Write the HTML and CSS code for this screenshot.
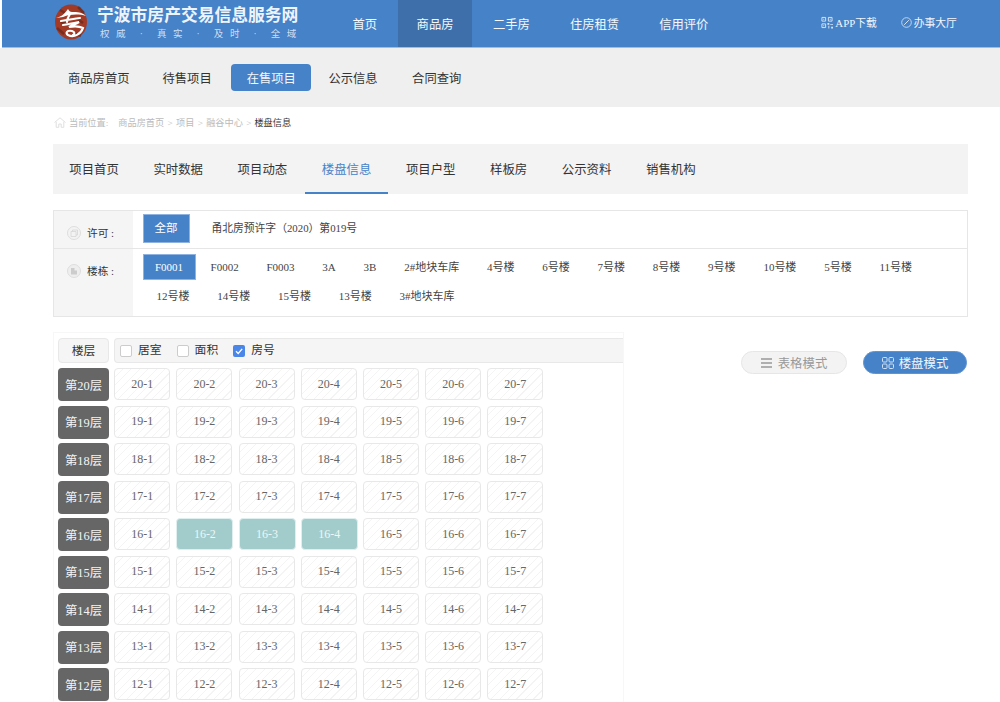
FILE: index.html
```html
<!DOCTYPE html>
<html lang="zh-CN">
<head>
<meta charset="utf-8">
<title>楼盘信息</title>
<link rel="stylesheet" href="styles.css">
</head>
<body>
<header class="topbar">
  <div class="brand">
    <svg class="logo" viewBox="0 0 34 36" width="34" height="36">
      <ellipse cx="17" cy="18" rx="16" ry="17.500" fill="#a23a26"/>
      <path d="M6 6 L13 10 M24 3 L30 9 M3 24 L10 30 M22 14 L29 19 M20 29 L27 32 M7 18 L12 20" stroke="#5e241a" stroke-width="2.500" opacity=".6" fill="none"/>
      <path d="M2 14 C6 13 10 11 14 5 C15 7 16 8 18 8 C23 8 28 8 32 12 C25 10 17 10 9 13" fill="#fff"/>
      <path d="M16 10 C14 13 13 15 13 18 M7 17 C13 16 19 15 26 14 M9 21 C15 20 20 19 25 18 C22 20 18 21 15 23 C20 22 25 22 29 24 C27 30 20 34 14 31 C11 29 13 26 18 27 C21 28 21 30 19 31" fill="none" stroke="#fff" stroke-width="2.200" stroke-linecap="round"/>
    </svg>
    <div class="brand-text">
      <div class="brand-title">宁波市房产交易信息服务网</div>
      <div class="brand-sub">权威 · 真实 · 及时 · 全域</div>
    </div>
  </div>
  <nav class="mainnav">
    <a class="mainnav-item">首页</a>
    <a class="mainnav-item is-active">商品房</a>
    <a class="mainnav-item">二手房</a>
    <a class="mainnav-item">住房租赁</a>
    <a class="mainnav-item">信用评价</a>
  </nav>
  <div class="toplinks">
    <a class="toplink toplink-app">
      <svg class="qr" viewBox="0 0 13 13" width="12" height="13">
        <path d="M1 1h4v4H1zM8 1h4v4H8zM1 8h4v4H1z" fill="none" stroke="#dbe7f5" stroke-width="1"/>
        <path d="M2.500 2.500h1v1h-1zM9.500 2.500h1v1h-1zM2.500 9.500h1v1h-1zM7 7h2v2H7zM10 8h3v1h-3zM8 10h1v3H8zM11 11h2v2h-2z" fill="#dbe7f5"/>
      </svg>APP下载
    </a>
    <a class="toplink">
      <svg class="hall" viewBox="0 0 11 11" width="11" height="11">
        <circle cx="5.500" cy="5.500" r="4.800" fill="none" stroke="#dbe7f5" stroke-width=".8"/>
        <path d="M3.200 7.800 L7.800 3.200" stroke="#dbe7f5" stroke-width="1" fill="none"/>
      </svg>办事大厅
    </a>
  </div>
</header>

<div class="subnav">
  <a class="subnav-item">商品房首页</a>
  <a class="subnav-item">待售项目</a>
  <a class="subnav-item is-active">在售项目</a>
  <a class="subnav-item">公示信息</a>
  <a class="subnav-item">合同查询</a>
</div>

<main class="content">
  <div class="crumbs">
    <svg class="crumb-home" viewBox="0 0 12 11" width="12" height="11">
      <path d="M.5 5.500 6 .8l5.500 4.700M2.200 4.800V10.300h2.600V7h2.400v3.300h2.600V4.800" fill="none" stroke="#ddd" stroke-width=".9"/>
    </svg>
    <span class="crumb-label">当前位置:</span>
    <span class="crumb-path">商品房首页 &gt; 项目 &gt; 融谷中心 &gt;</span>
    <span class="crumb-current">楼盘信息</span>
  </div>

  <div class="tabs">
    <a class="tab">项目首页</a>
    <a class="tab">实时数据</a>
    <a class="tab">项目动态</a>
    <a class="tab is-active">楼盘信息</a>
    <a class="tab">项目户型</a>
    <a class="tab">样板房</a>
    <a class="tab">公示资料</a>
    <a class="tab">销售机构</a>
  </div>

  <section class="filter">
    <div class="filter-row filter-row-permit">
      <div class="filter-label">
        <svg class="filter-icon" viewBox="0 0 14 14" width="14" height="14">
          <circle cx="7" cy="7" r="6.500" fill="#f3f3f3" stroke="#ddd"/>
          <path d="M4 5.500h5v5H4zM5.500 5.500V4h5v5H9" fill="none" stroke="#d5d5d5" stroke-width=".8"/>
        </svg>
        <span>许可 :</span>
      </div>
      <div class="filter-options">
        <a class="option option-all is-active">全部</a>
        <a class="option option-permit">甬北房预许字（2020）第019号</a>
      </div>
    </div>
    <div class="filter-row">
      <div class="filter-label">
        <svg class="filter-icon" viewBox="0 0 14 14" width="14" height="14">
          <circle cx="7" cy="7" r="6.500" fill="#eee" stroke="#ddd"/>
          <path d="M4 10.500V4h3.500v6.500zM7.500 6.500H10v4H7.500z" fill="#ccc"/>
        </svg>
        <span>楼栋 :</span>
      </div>
      <div class="filter-options filter-options-wrap">
        <a class="option is-active">F0001</a>
        <a class="option">F0002</a>
        <a class="option">F0003</a>
        <a class="option">3A</a>
        <a class="option">3B</a>
        <a class="option">2#地块车库</a>
        <a class="option">4号楼</a>
        <a class="option">6号楼</a>
        <a class="option">7号楼</a>
        <a class="option">8号楼</a>
        <a class="option">9号楼</a>
        <a class="option">10号楼</a>
        <a class="option">5号楼</a>
        <a class="option">11号楼</a>
        <a class="option">12号楼</a>
        <a class="option">14号楼</a>
        <a class="option">15号楼</a>
        <a class="option">13号楼</a>
        <a class="option">3#地块车库</a>
      </div>
    </div>
  </section>

  <section class="board">
    <div class="panel">
      <div class="panel-head">
        <div class="floor-title">楼层</div>
        <div class="checks">
          <label class="check"><span class="box"></span>居室</label>
          <label class="check"><span class="box"></span>面积</label>
          <label class="check"><span class="box is-checked"><svg viewBox="0 0 12 12" width="12" height="12"><path d="M3 6.200 5.200 8.500 9.200 3.800" fill="none" stroke="#fff" stroke-width="1.300"/></svg></span>房号</label>
        </div>
      </div>
      <div class="grid">
        <div class="floor">第20层</div><div class="cell">20-1</div><div class="cell">20-2</div><div class="cell">20-3</div><div class="cell">20-4</div><div class="cell">20-5</div><div class="cell">20-6</div><div class="cell">20-7</div>
        <div class="floor">第19层</div><div class="cell">19-1</div><div class="cell">19-2</div><div class="cell">19-3</div><div class="cell">19-4</div><div class="cell">19-5</div><div class="cell">19-6</div><div class="cell">19-7</div>
        <div class="floor">第18层</div><div class="cell">18-1</div><div class="cell">18-2</div><div class="cell">18-3</div><div class="cell">18-4</div><div class="cell">18-5</div><div class="cell">18-6</div><div class="cell">18-7</div>
        <div class="floor">第17层</div><div class="cell">17-1</div><div class="cell">17-2</div><div class="cell">17-3</div><div class="cell">17-4</div><div class="cell">17-5</div><div class="cell">17-6</div><div class="cell">17-7</div>
        <div class="floor">第16层</div><div class="cell">16-1</div><div class="cell is-sold">16-2</div><div class="cell is-sold">16-3</div><div class="cell is-sold">16-4</div><div class="cell">16-5</div><div class="cell">16-6</div><div class="cell">16-7</div>
        <div class="floor">第15层</div><div class="cell">15-1</div><div class="cell">15-2</div><div class="cell">15-3</div><div class="cell">15-4</div><div class="cell">15-5</div><div class="cell">15-6</div><div class="cell">15-7</div>
        <div class="floor">第14层</div><div class="cell">14-1</div><div class="cell">14-2</div><div class="cell">14-3</div><div class="cell">14-4</div><div class="cell">14-5</div><div class="cell">14-6</div><div class="cell">14-7</div>
        <div class="floor">第13层</div><div class="cell">13-1</div><div class="cell">13-2</div><div class="cell">13-3</div><div class="cell">13-4</div><div class="cell">13-5</div><div class="cell">13-6</div><div class="cell">13-7</div>
        <div class="floor">第12层</div><div class="cell">12-1</div><div class="cell">12-2</div><div class="cell">12-3</div><div class="cell">12-4</div><div class="cell">12-5</div><div class="cell">12-6</div><div class="cell">12-7</div>
      </div>
    </div>
    <div class="modes">
      <a class="mode">
        <svg viewBox="0 0 12 10" width="12" height="10"><path d="M0 1h11M0 5h11M0 9h11" stroke="#999" stroke-width="1.300" fill="none"/></svg>表格模式
      </a>
      <a class="mode is-active">
        <svg viewBox="0 0 12 12" width="12" height="12"><g fill="none" stroke="#cfe0f4" stroke-width="1"><rect x=".5" y=".5" width="4.500" height="4.500" rx="1"/><rect x="7" y=".5" width="4.500" height="4.500" rx="1"/><rect x=".5" y="7" width="4.500" height="4.500" rx="1"/><rect x="7" y="7" width="4.500" height="4.500" rx="1"/></g></svg>楼盘模式
      </a>
    </div>
  </section>
</main>
</body>
</html>
```
FILE: styles.css
```css
* { box-sizing: border-box; }
html, body { margin: 0; height: 702px; overflow: hidden; }
body {
  background: #fff;
  padding-left: 2px;
  font-family: "Liberation Serif", "Noto Sans CJK SC", serif;
  color: #333;
}
a { text-decoration: none; color: inherit; display: block; }

/* top bar */
.topbar {
  display: flex;
  height: 48px;
  background: #4682c8;
  border-bottom: 1px solid #9dbde4;
  color: #fff;
  padding-left: 52px;
}
.brand { display: flex; width: 279.500px; align-items: center; }
.logo { flex: none; margin-top: -4px; }
.brand-text { margin-left: 9px; margin-top: -1px; }
.brand-title { font-size: 16.800px; line-height: 20px; white-space: nowrap; font-weight: 700; color: #eef4fb; }
.brand-sub { font-size: 9.500px; line-height: 12px; margin-top: 2px; padding-left: 3px; letter-spacing: 6.600px; word-spacing: -1.500px; white-space: nowrap; color: #cfdff2; }
.mainnav { display: flex; gap: 2px; }
.mainnav-item { display: flex; align-items: center; padding: 0 19px; font-size: 12.300px; color: #f4f8fc; height: 47px; }
.mainnav-item.is-active { background: #3e6fab; padding: 0 18.500px; }
.toplinks { display: flex; align-items: center; margin-left: 94px; gap: 24px; margin-top: -3px; }
.toplink { display: flex; align-items: center; font-size: 10.800px; color: #f1f6fb; white-space: nowrap; gap: 2px; }

/* second nav */
.subnav {
  display: flex;
  align-items: center;
  height: 59px;
  margin-left: -2px;
  padding-left: 54px;
  background: #efefef;
}
.subnav-item { font-size: 12.300px; color: #333; padding: 0 14px; margin-right: 5px; line-height: 30px; height: 27px; border-radius: 4px; white-space: nowrap; }
.subnav-item.is-active { background: #4682c8; color: #f3f7fc; padding: 0 15px 0 16px; margin-right: 3.500px; }
.subnav-item:nth-child(4) { margin-right: 6.500px; }

/* content */
.content { padding: 0 32px 0 51px; }

.crumbs { display: flex; align-items: center; height: 30px; font-size: 9.200px; color: #bbb; white-space: nowrap; }
.crumb-home { margin: 0 3px 0 1px; }
.crumb-label { font-size: 9.200px; margin-right: 10px; }
.crumb-path { margin-right: 3px; word-spacing: 1px; }
.crumb-current { color: #333; }

.tabs { display: flex; height: 50px; margin-top: 7px; background: #f3f3f3; }
.tab { padding: 0 16.300px; margin-right: 2px; line-height: 52px; font-size: 12.400px; color: #333; white-space: nowrap; }
.tab.is-active { color: #4682c8; border-bottom: 2px solid #4682c8; }

/* filter */
.filter { margin-top: 16px; height: 107px; border: 1px solid #e6e6e6; }
.filter-row { display: flex; }
.filter-row-permit { height: 38px; border-bottom: 1px solid #e6e6e6; }
.filter-row:last-child { height: 67px; }
.filter-label { width: 79px; flex: none; display: flex; align-items: flex-start; padding: 14px 0 0 13px; background: #f5f5f5; font-size: 10.700px; line-height: 16px; color: #333; }
.filter-icon { margin-right: 6px; margin-top: 1px; flex: none; }
.filter-options { flex: 1; display: flex; align-items: flex-start; padding: 3px 0 0 9.500px; font-size: 11px; color: #444; }
.filter-options-wrap { flex-wrap: wrap; padding-top: 5px; align-content: flex-start; }
.option { padding: 0 13.900px; line-height: 27px; height: 26px; white-space: nowrap; }
.filter-options-wrap .option { margin-bottom: 3px; }
.option.is-active { background: #4682c8; color: #fff; border: 1px solid #8fb3e0; line-height: 24px; padding: 0 11.500px; margin-right: 1px; }
.option-all { height: 29px; width: 47px; text-align: center; line-height: 27px !important; font-size: 11.500px; padding: 0 !important; }
.option-permit { margin-left: 7px; line-height: 29px; font-size: 10.800px; }

/* board */
.board { display: flex; margin-top: 15px; }
.panel { width: 571px; flex: none; height: 372px; padding: 5px 0 0 4px; border: 1px solid #f7f7f7; border-bottom: 0; }
.panel-head { display: flex; gap: 5px; height: 25px; }
.floor-title { width: 51px; flex: none; display: flex; align-items: center; justify-content: center; padding-bottom: 2px; background: #f5f5f5; border: 1px solid #e8e8e8; border-radius: 4px; font-size: 11.800px; color: #333; }
.checks { flex: 1; display: flex; align-items: center; padding-left: 5px; gap: 15px; background: #f5f5f5; border: 1px solid #e8e8e8; border-right: 0; border-radius: 4px 0 0 4px; font-size: 11.800px; color: #333; }
.check { display: flex; align-items: center; gap: 6px; margin-top: -3px; }
.box { width: 12px; height: 12px; background: #fff; border: 1px solid #ccc; border-radius: 2px; display: block; margin-top: 3px; }
.box.is-checked { background: #4a86e8; border: 0; }
.box svg { display: block; }

.grid {
  display: grid;
  grid-template-columns: 50px repeat(7, 56px);
  column-gap: 6.200px;
  row-gap: 4.500px;
  grid-auto-rows: 33px;
  margin-top: 5px;
  opacity: .999;
}
.floor { margin-right: -1px; background: #666; color: #f4f4f4; border-radius: 4px; display: flex; align-items: center; justify-content: center; font-size: 12.400px; }
.cell {
  display: flex; align-items: center; justify-content: center;
  margin-bottom: 1px;
  border: 1px solid #e8e8e8;
  border-radius: 4px;
  font-size: 12px;
  color: #666;
  background: repeating-linear-gradient(135deg, #fff 0, #fff 5px, #f4f4f4 5px, #f4f4f4 6px);
}
.cell.is-sold { background: #a2cccb; border-color: #dfeeee; color: #eef6f6; margin-right: -1px; }

.modes { display: flex; gap: 16px; margin-left: 117px; padding-top: 19px; align-items: flex-start; }
.mode { width: 106px; height: 23px; border-radius: 12px; display: flex; align-items: center; justify-content: center; gap: 5px; font-size: 12.400px; color: #999; background: #f3f3f3; border: 1px solid #e6e6e6; }
.mode.is-active { width: 104px; background: #4682c8; color: #f2f6fb; border-color: #5f93d1; }
```
